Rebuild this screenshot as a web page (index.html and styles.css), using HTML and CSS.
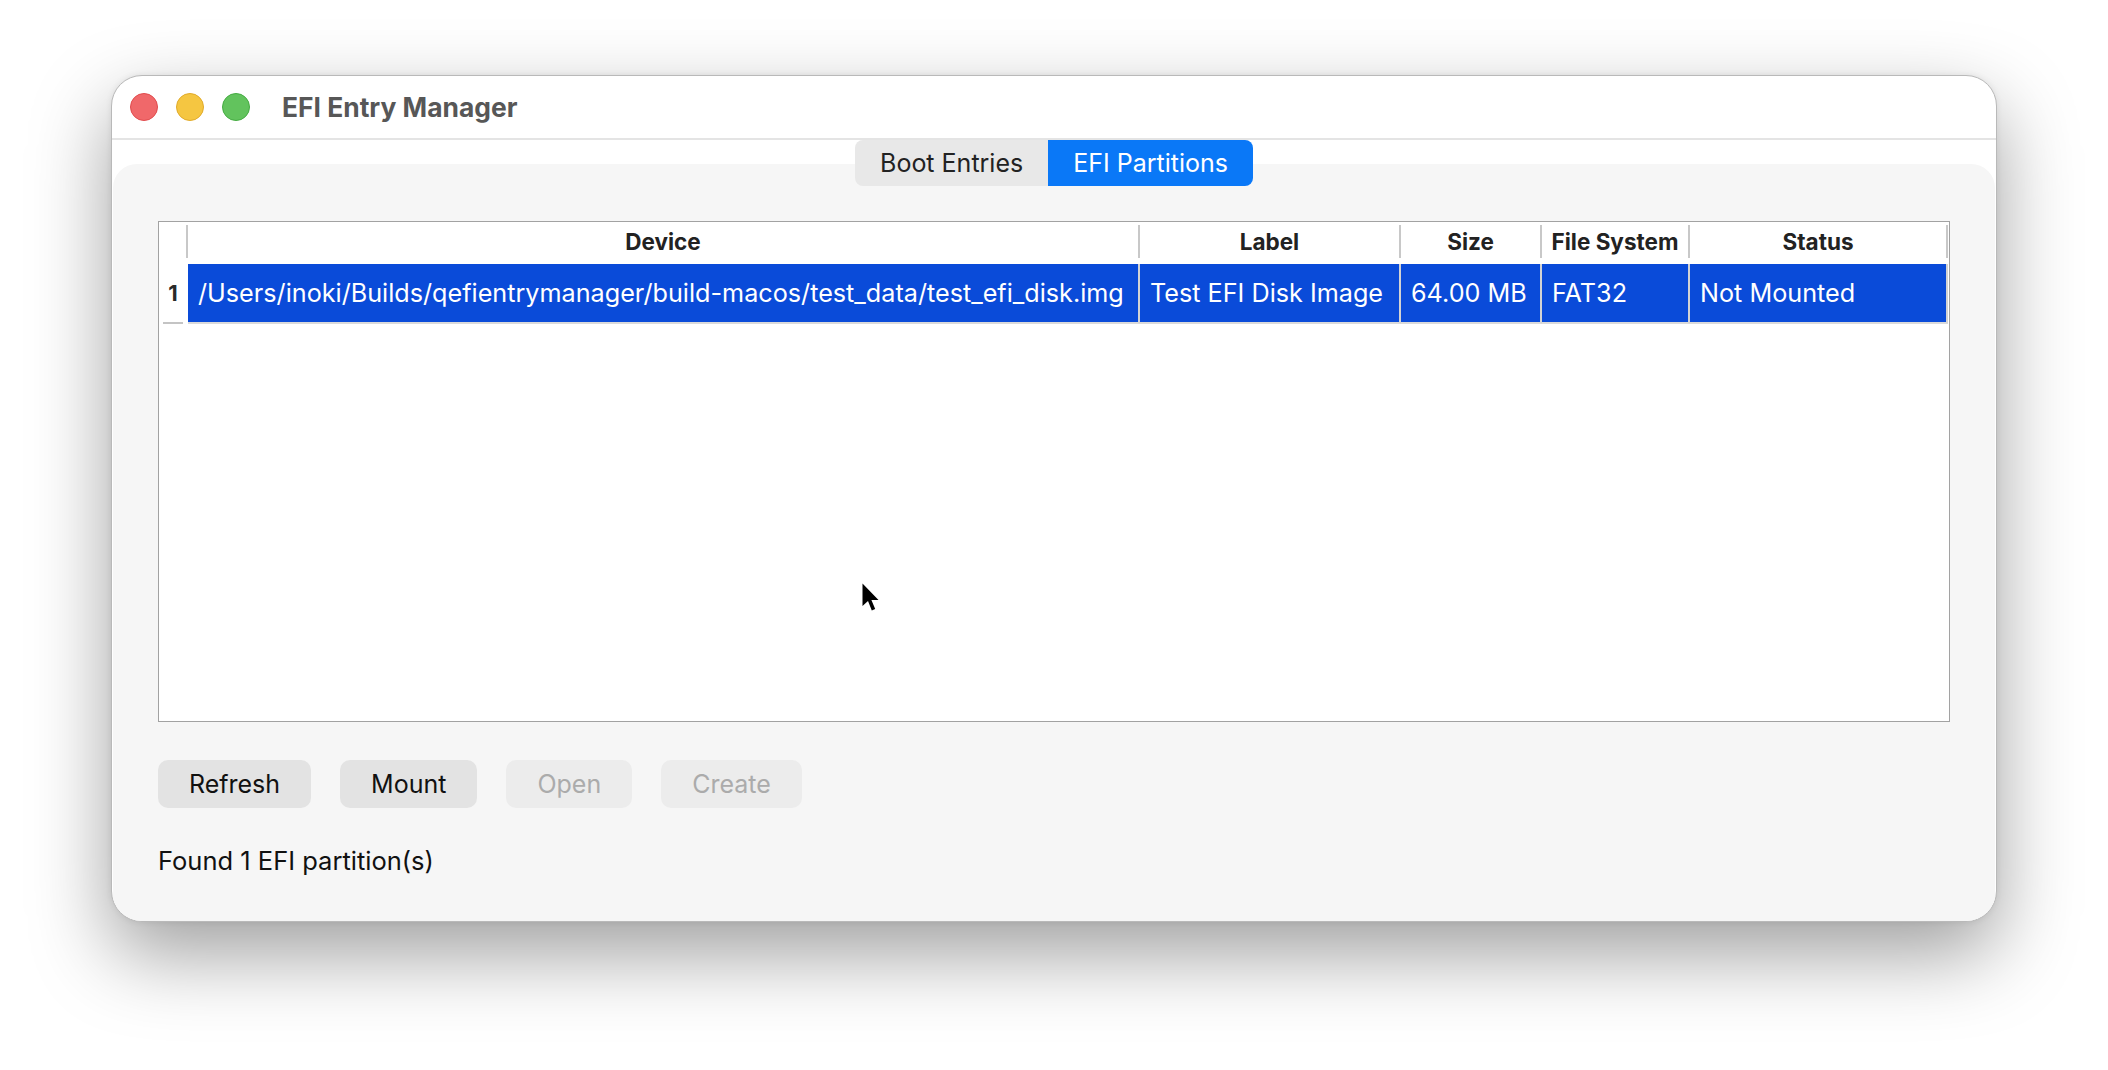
FILE: index.html
```html
<!DOCTYPE html>
<html lang="en">
<head>
    <meta charset="UTF-8">
    <title>EFI Entry Manager</title>
    <link rel="stylesheet" href="styles.css">
</head>
<body>

    <div class="window">
        <div class="titlebar">
            <div class="lights">
                <span class="light red"></span>
                <span class="light yellow"></span>
                <span class="light green"></span>
            </div>
            <div class="title">EFI Entry Manager</div>
        </div>

        <div class="tabs">
            <div class="tab">Boot Entries</div>
            <div class="tab active">EFI Partitions</div>
        </div>

        <div class="pane">
            <!-- partition table -->
            <div class="table">
                <div class="thead">
                    <div class="th corner"></div>
                    <div class="th">Device</div>
                    <div class="th">Label</div>
                    <div class="th">Size</div>
                    <div class="th">File System</div>
                    <div class="th">Status</div>
                </div>
                <div class="tr selected">
                    <div class="rownum">1</div>
                    <div class="td">/Users/inoki/Builds/qefientrymanager/build-macos/test_data/test_efi_disk.img</div>
                    <div class="td">Test EFI Disk Image</div>
                    <div class="td">64.00 MB</div>
                    <div class="td">FAT32</div>
                    <div class="td">Not Mounted</div>
                </div>
            </div>

            <div class="actions">
                <button class="btn">Refresh</button>
                <button class="btn">Mount</button>
                <button class="btn" disabled>Open</button>
                <button class="btn" disabled>Create</button>
            </div>

            <div class="status">Found 1 EFI partition(s)</div>
        </div>

        <!-- mouse pointer -->
        <svg class="cursor" width="19" height="31" viewBox="0 0 19 31">
            <path d="M1.5 1.5 V24 L7 19 L10.8 28.5 L14.2 27 L10.4 18 H17.5 Z" fill="#000" stroke="#fff" stroke-width="1.6" stroke-linejoin="round" paint-order="stroke"/>
        </svg>
    </div>

</body>
</html>
```

FILE: styles.css
```css
* {
    box-sizing: border-box;
}

html, body {
    min-height: 100vh;
}

body {
    margin: 0;
    padding: 75px 0 148px 111px;
    background-color: #fff;
    font-family: Inter, "Noto Sans", sans-serif;
}

.window {
    position: relative;
    width: 1886px;
    height: 847px;
    border: 1px solid #b9b9b9;
    border-radius: 31px;
    background-color: #fff;
    overflow: hidden;
    display: flex;
    flex-direction: column;
    box-shadow: 0 32px 80px rgba(0, 0, 0, 0.38), 0 0 6px rgba(0, 0, 0, 0.08);
}

.titlebar {
    height: 64px;
    flex-shrink: 0;
    display: flex;
    align-items: center;
    padding-left: 18px;
    border-bottom: 2px solid #e4e4e4;
}

.lights {
    display: flex;
    gap: 18px;
}

.light {
    width: 28px;
    height: 28px;
    border-radius: 50%;
    border: 1px solid;
}

.light.red {
    background-color: #f0686a;
    border-color: #e04b4d;
}

.light.yellow {
    background-color: #f5c641;
    border-color: #e0aa2a;
}

.light.green {
    background-color: #62c35d;
    border-color: #45ab42;
}

.title {
    margin-left: 32px;
    font-size: 26.4px;
    font-weight: bold;
    color: #575757;
}

.tabs {
    position: relative;
    z-index: 1;
    align-self: center;
    display: flex;
    height: 46px;
    border-radius: 8px;
    overflow: hidden;
    font-size: 25px;
}

.tab {
    padding: 0 25px;
    line-height: 46px;
    background-color: #e8e8e8;
    color: #222;
}

.tab.active {
    background-color: #0a78f7;
    color: #fff;
}

.pane {
    flex: 1;
    margin: -22px 1px 0;
    padding: 57px 45px 0;
    border-radius: 24px 24px 0 0;
    background-color: #f6f6f6;
}

.table {
    height: 501px;
    border: 1px solid #a2a2a2;
    background-color: #fff;
}

.thead, .tr {
    display: grid;
    grid-template-columns: 29px 952px 261px 141px 148px 258px;
}

.thead {
    padding: 3px 0 6px;
}

.th {
    border-right: 2px solid #c8c8c8;
    line-height: 33px;
    text-align: center;
    font-size: 22.5px;
    font-weight: bold;
    color: #222;
}

.td {
    height: 60px;
    padding-left: 10px;
    line-height: 58px;
    font-size: 25.2px;
    white-space: nowrap;
    overflow: hidden;
    border-right: 2px solid #d3d3d3;
    border-bottom: 2px solid #dadada;
}

.tr.selected .td {
    background-color: #0a4bd9;
    color: #fff;
}

.rownum {
    margin: 0 5px 0 4px;
    border-bottom: 2px solid #c4c4c4;
    line-height: 58px;
    text-align: center;
    font-size: 22px;
    font-weight: bold;
    color: #2a2a2a;
}

.actions {
    display: flex;
    gap: 29px;
    margin-top: 38px;
}

.btn {
    height: 48px;
    padding: 0 31px;
    border: none;
    border-radius: 10px;
    background-color: #e3e3e3;
    font-family: inherit;
    font-size: 25px;
    color: #111;
}

.btn:disabled {
    background-color: #ececec;
    color: #ababab;
}

.status {
    margin-top: 38px;
    font-size: 25.5px;
    line-height: 30px;
    color: #111;
}

.cursor {
    position: absolute;
    left: 749px;
    top: 506px;
}
```
